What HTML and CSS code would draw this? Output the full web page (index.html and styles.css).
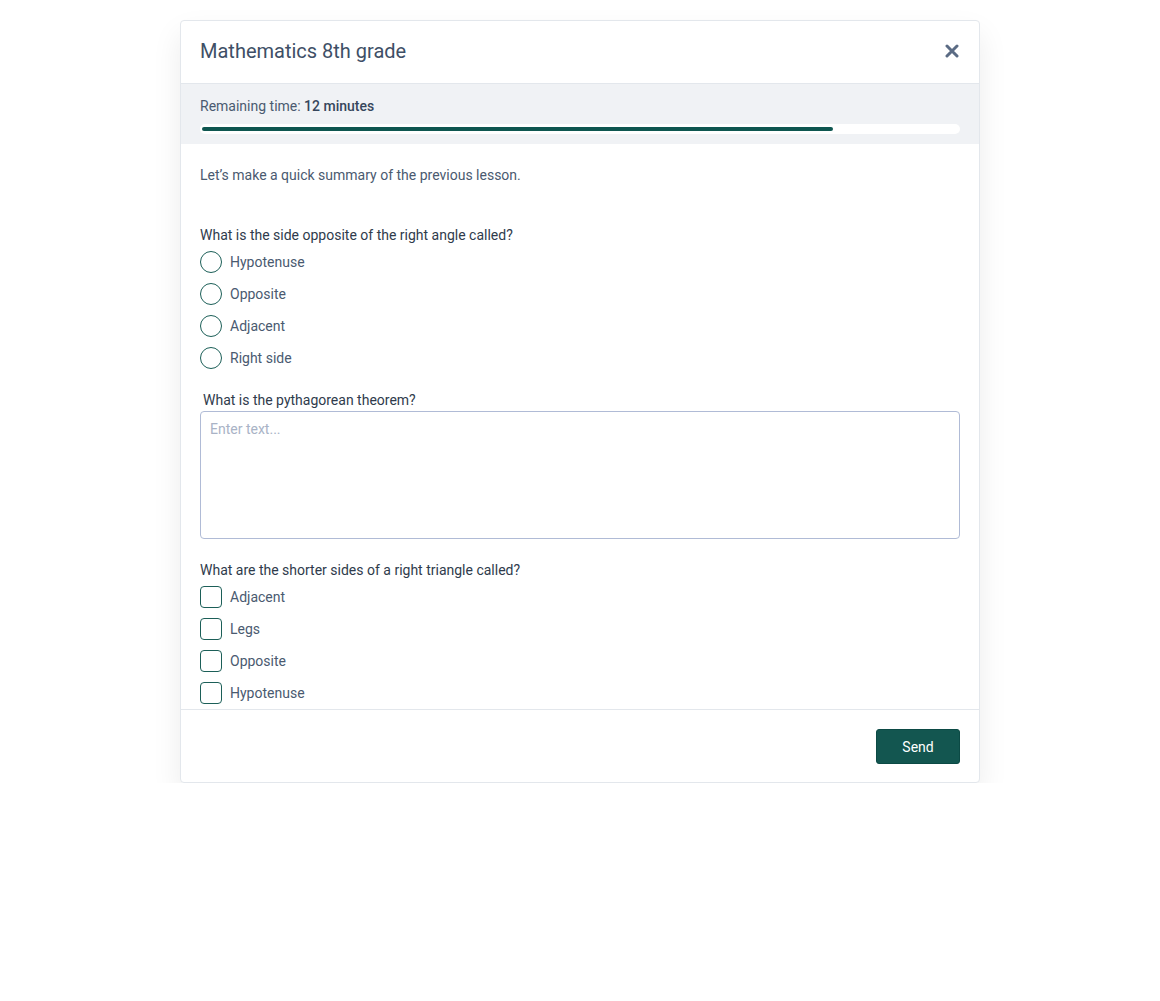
FILE: index.html
```html
<!DOCTYPE html>
<html lang="en">
<head>
  <meta charset="UTF-8" />
  <meta name="viewport" content="width=device-width, initial-scale=1.0"/>
  <title>Mathematics 8th grade</title>
  <link rel="stylesheet" href="styles.css">
</head>
<body>
  <div class="modal">
    <div class="modal-header">
      <h1>Mathematics 8th grade</h1>
      <button class="close" aria-label="Close">
        <svg width="14" height="14" viewBox="0 0 14 14">
          <path d="M2 2 L12 12 M12 2 L2 12" stroke="#5b6b84" stroke-width="3" stroke-linecap="round"/>
        </svg>
      </button>
    </div>

    <div class="timer">
      <div class="timer-label">Remaining time: <strong>12 minutes</strong></div>
      <div class="track"><div class="fill" style="width: 83.4%"></div></div>
    </div>

    <div class="modal-body">
      <p class="intro">Let’s make a quick summary of the previous lesson.</p>

      <div class="question">
        <div class="q-label">What is the side opposite of the right angle called?</div>
        <ul class="options">
          <li><span class="radio"></span>Hypotenuse</li>
          <li><span class="radio"></span>Opposite</li>
          <li><span class="radio"></span>Adjacent</li>
          <li><span class="radio"></span>Right side</li>
        </ul>
      </div>

      <div class="question">
        <div class="q-label indent">What is the pythagorean theorem?</div>
        <textarea placeholder="Enter text..."></textarea>
      </div>

      <div class="question">
        <div class="q-label">What are the shorter sides of a right triangle called?</div>
        <ul class="options">
          <li><span class="check"></span>Adjacent</li>
          <li><span class="check"></span>Legs</li>
          <li><span class="check"></span>Opposite</li>
          <li><span class="check"></span>Hypotenuse</li>
        </ul>
      </div>
    </div>

    <div class="modal-footer">
      <button class="send">Send</button>
    </div>
  </div>
</body>
</html>
```

FILE: styles.css
```css
* {
  box-sizing: border-box;
}
body {
  margin: 0;
  font-family: Roboto, 'Liberation Sans', sans-serif;
  background: #fff;
  color: #3d4d63;
}
.modal {
  width: 800px;
  margin: 20px auto 0;
  background: #fff;
  border: 1px solid #e3e7ec;
  border-radius: 4px;
  box-shadow: 0 14px 30px rgba(0, 0, 0, 0.08);
}
.modal-header {
  height: 63px;
  padding: 0 20px 2px 19px;
  display: flex;
  align-items: center;
  justify-content: space-between;
  border-bottom: 1px solid #e3e7ec;
}
.modal-header h1 {
  margin: 0;
  font-size: 20px;
  font-weight: 400;
  color: #3e4f66;
}
.close {
  border: none;
  background: none;
  padding: 0;
  display: flex;
  cursor: pointer;
}
.timer {
  background: #f0f2f5;
  padding: 12px 19px 10px;
}
.timer-label {
  font-size: 14px;
  line-height: 20px;
  color: #4a5a70;
}
.timer-label strong {
  font-weight: 500;
  color: #36465c;
}
.track {
  margin-top: 8px;
  height: 10px;
  padding: 3px 2px;
  background: #fff;
  border-radius: 5px;
}
.fill {
  height: 4px;
  background: #0e5650;
  border-radius: 2px;
}
.modal-body {
  padding: 21px 19px 5px;
}
.intro {
  margin: 0 0 39px;
  font-size: 14px;
  line-height: 21px;
  color: #4a5a70;
}
.question {
  margin-bottom: 21px;
}
.question:last-child {
  margin-bottom: 0;
}
.q-label {
  font-size: 14px;
  line-height: 20px;
  color: #2f3b4c;
}
.q-label.indent {
  padding-left: 3px;
  margin-bottom: 1px;
}
.options {
  list-style: none;
  margin: 6px 0 0;
  padding: 0;
  display: flex;
  flex-direction: column;
  gap: 10px;
}
.options li {
  display: flex;
  align-items: center;
  gap: 8px;
  font-size: 14px;
  line-height: 22px;
  color: #4a5a70;
}
.radio,
.check {
  width: 22px;
  height: 22px;
  border: 1.5px solid #1c5f58;
  flex-shrink: 0;
}
.radio {
  border-radius: 50%;
}
.check {
  border-radius: 4px;
}
textarea {
  display: block;
  width: 100%;
  height: 128px;
  padding: 9px 9px;
  border: 1px solid #b0bbd6;
  border-radius: 4px;
  font-family: inherit;
  font-size: 14px;
  line-height: 16px;
  resize: none;
  color: #3d4d63;
}
textarea::placeholder {
  color: #a9b3c6;
}
.modal-footer {
  border-top: 1px solid #e3e7ec;
  padding: 19px 19px 18px;
  display: flex;
  justify-content: flex-end;
}
.send {
  width: 84px;
  height: 35px;
  border: 1px solid #0c4a45;
  border-radius: 3px;
  background: #135650;
  color: #fff;
  font-family: inherit;
  font-size: 14px;
}
```
